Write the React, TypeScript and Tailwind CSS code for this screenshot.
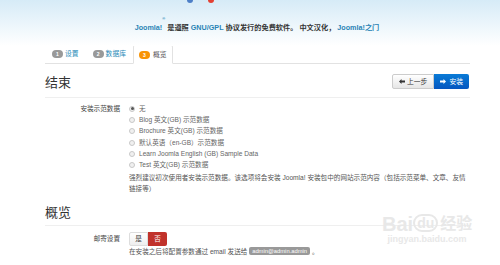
import React from "react";

const radios = [
  "无",
  "Blog 英文(GB) 示范数据",
  "Brochure 英文(GB) 示范数据",
  "默认英语（en-GB）示范数据",
  "Learn Joomla English (GB) Sample Data",
  "Test 英文(GB) 示范数据",
];

function Radio({ checked }: { checked?: boolean }) {
  return (
    <span className="w-[6px] h-[6px] rounded-full border border-[#c8c8c8] bg-[#f0f0f0] flex items-center justify-center shrink-0">
      {checked && <span className="w-[3px] h-[3px] rounded-full bg-[#555]" />}
    </span>
  );
}

function Badge({ n, color }: { n: string; color: string }) {
  return (
    <span className={`h-[8px] w-[11px] rounded-full ${color} text-white text-[5px] leading-[8px] flex items-center justify-center font-bold`}>
      {n}
    </span>
  );
}

export default function App() {
  return (
    <div className="w-[500px] h-[265px] overflow-hidden bg-white relative font-['Liberation_Sans','Noto_Sans_CJK_SC',sans-serif] text-[#555] leading-[10px] text-[7px]">
      {/* header */}
      <div className="h-[46px] bg-gradient-to-b from-[#d6ebf7] to-white relative">
        <span className="absolute left-[187px] top-[-3px] w-[6px] h-[6px] rounded-full bg-[#4d7fc7]" />
        <span className="absolute left-[208px] top-[-3px] w-[6px] h-[6px] rounded-full bg-[#e34032]" />
        <div className="flex justify-center pt-[23px] text-[7.2px] font-bold text-[#333] leading-[10px] pl-[14px]">
          <span className="text-[#2a83b5]">Joomla!</span>
          <sup className="text-[4px] text-[#2a83b5] -mt-[2px]">®</sup>
          <span>&nbsp;是遵照&nbsp;</span>
          <span className="text-[#2a83b5]">GNU/GPL</span>
          <span>&nbsp;协议发行的免费软件。 中文汉化，&nbsp;</span>
          <span className="text-[#2a83b5]">Joomla!之门</span>
        </div>
      </div>

      <div className="ml-[45px] w-[425px]">
        {/* tabs */}
        <div className="flex items-end h-[18px] border-b border-[#e2e2e2] text-[6.8px]">
          <div className="flex items-center gap-[2px] px-[7px] h-[18px] text-[#2a8bb8]">
            <Badge n="1" color="bg-[#999]" />
            <span>设置</span>
          </div>
          <div className="flex items-center gap-[2px] px-[7px] h-[18px] text-[#2a8bb8]">
            <Badge n="2" color="bg-[#999]" />
            <span>数据库</span>
          </div>
          <div className="flex items-center gap-[3px] px-[5px] h-[19px] -mb-[1px] border border-[#e2e2e2] border-b-white bg-white text-[#555] rounded-t-[2px]">
            <Badge n="3" color="bg-[#f89406]" />
            <span>概览</span>
          </div>
        </div>

        {/* 结束 */}
        <div className="flex items-center justify-between pt-[10px] pb-[8px] border-b border-[#efefef]">
          <span className="text-[13px] leading-[15px] text-[#333] font-['Noto_Sans_CJK_SC',sans-serif]">结束</span>
          <div className="flex h-[15px] mr-[1px] text-[6.8px]">
            <div className="flex items-center gap-[2px] px-[6px] border border-[#ccc] bg-gradient-to-b from-white to-[#e6e6e6] text-[#333] rounded-l-[2px]">
              <svg width="6" height="5" viewBox="0 0 6 5"><path d="M0 2.5 L2.5 0 V1.6 H6 V3.4 H2.5 V5 Z" fill="#333" /></svg>
              <span>上一步</span>
            </div>
            <div className="flex items-center gap-[3px] px-[6px] bg-gradient-to-b from-[#0a7bd6] to-[#0656c0] text-white rounded-r-[2px]">
              <svg width="6" height="5" viewBox="0 0 6 5"><path d="M6 2.5 L3.5 0 V1.6 H0 V3.4 H3.5 V5 Z" fill="#fff" /></svg>
              <span>安装</span>
            </div>
          </div>
        </div>

        {/* 安装示范数据 */}
        <div className="flex mt-[5px] text-[6.6px] text-[#666]">
          <div className="w-[75px] text-right leading-[11.3px] text-[#444]">安装示范数据</div>
          <div className="ml-[9px] flex-1">
            {radios.map((r, i) => (
              <div key={i} className="flex items-center gap-[4px] h-[11.3px]">
                <Radio checked={i === 0} />
                <span>{r}</span>
              </div>
            ))}
            <div className="leading-[11px] mt-[1px] pr-[2px] text-[#555]">
              强烈建议初次使用者安装示范数据。该选项将会安装 Joomla! 安装包中的网站示范内容（包括示范菜单、文章、友情链接等）
            </div>
          </div>
        </div>

        {/* 概览 */}
        <div className="flex pt-[10px] pb-[6px] border-b border-[#efefef]">
          <span className="text-[13px] leading-[15px] text-[#333] font-['Noto_Sans_CJK_SC',sans-serif]">概览</span>
        </div>

        <div className="flex mt-[6px] text-[6.6px]">
          <div className="w-[75px] text-right text-[#444] leading-[14px]">邮寄设置</div>
          <div className="ml-[9px]">
            <div className="flex h-[14px]">
              <div className="w-[19px] flex items-center justify-center border border-[#ddd] bg-gradient-to-b from-white to-[#eee] text-[#333] rounded-l-[2px]">是</div>
              <div className="w-[19px] flex items-center justify-center bg-[#c1322b] text-white rounded-r-[2px]">否</div>
            </div>
            <div className="flex items-center h-[11px] leading-[11px] text-[#555]">
              <span>在安装之后将配置参数通过 email 发送给&nbsp;</span>
              <span className="bg-[#999] text-white px-[3px] rounded-[2px] text-[5.8px] leading-[8px]">admin@admin.admin</span>
              <span>&nbsp;。</span>
            </div>
          </div>
        </div>
      </div>

      {/* baidu watermark */}
      <div className="absolute left-[382px] top-[214px] flex flex-col items-center text-[#e8e8e8] pointer-events-none">
        <div className="flex items-end font-bold leading-[20px]">
          <span className="text-[20px] font-['Liberation_Sans',sans-serif]">Bai</span>
          <span className="text-[14px] border-[2px] border-[#e8e8e8] rounded-full px-[2px] leading-[14px] mb-[2px]">du</span>
          <span className="text-[16px] ml-[2px]">经验</span>
        </div>
        <div className="text-[9px] leading-[10px] font-bold">jingyan.baidu.com</div>
      </div>
    </div>
  );
}
